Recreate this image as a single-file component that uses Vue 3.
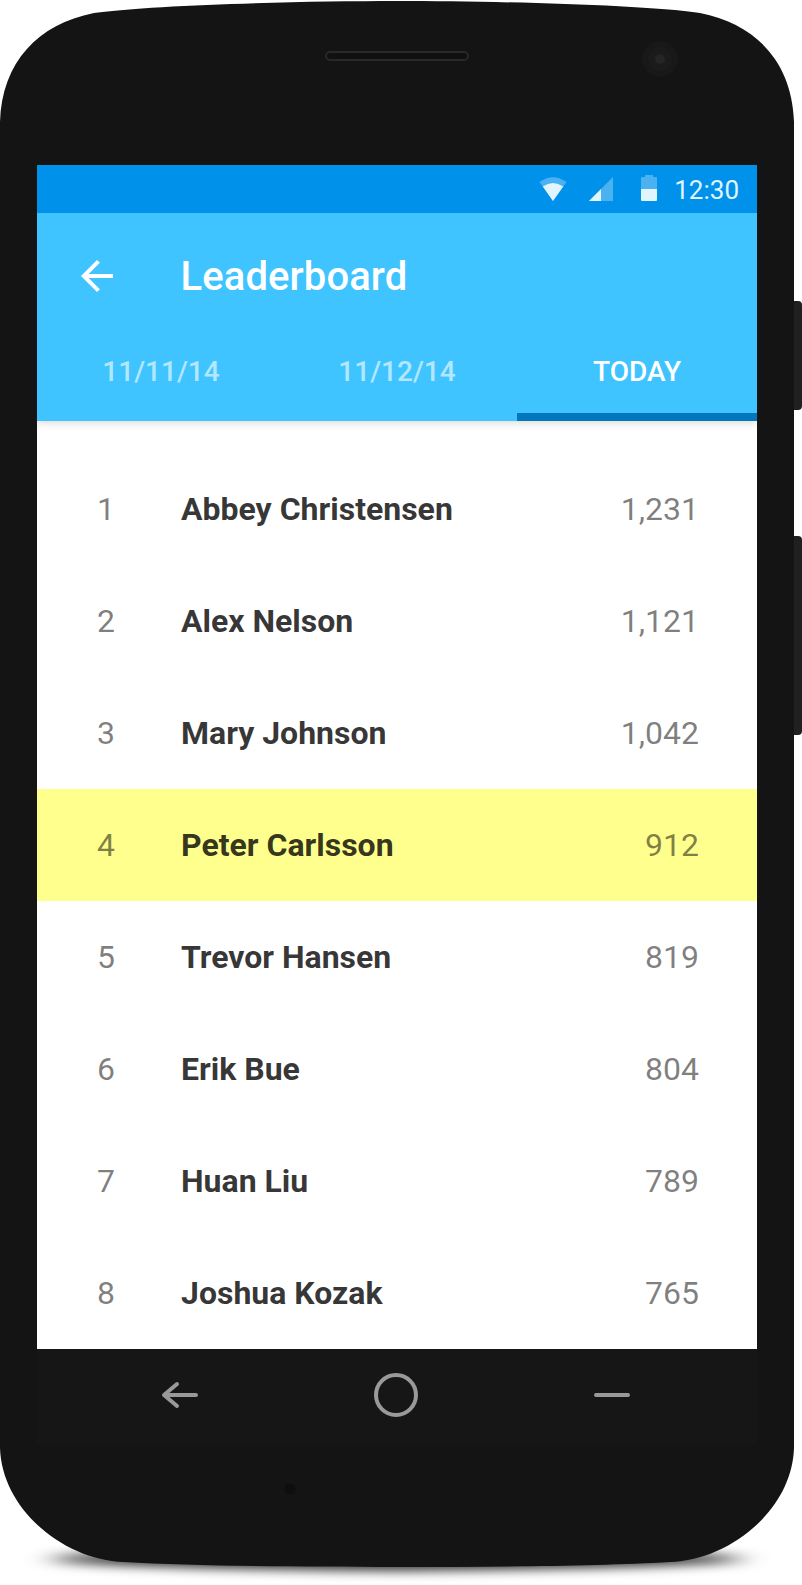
<script setup>
const tabs = [
  { label: '11/11/14', cls: 'first' },
  { label: '11/12/14', cls: 'second' },
  { label: 'TODAY', cls: 'active' },
]
const players = [
  { rank: 1, name: 'Abbey Christensen', score: '1,231' },
  { rank: 2, name: 'Alex Nelson', score: '1,121' },
  { rank: 3, name: 'Mary Johnson', score: '1,042' },
  { rank: 4, name: 'Peter Carlsson', score: '912', me: true },
  { rank: 5, name: 'Trevor Hansen', score: '819' },
  { rank: 6, name: 'Erik Bue', score: '804' },
  { rank: 7, name: 'Huan Liu', score: '789' },
  { rank: 8, name: 'Joshua Kozak', score: '765' },
]
</script>

<template>
  <div class="phone">
    <svg class="shell" width="802" height="1585" viewBox="0 0 802 1585">
      <defs>
        <filter id="soft" x="-10%" y="-150%" width="120%" height="400%">
          <feGaussianBlur stdDeviation="14 5.5" />
        </filter>
      </defs>
      <path d="M48 1559Q80 1549 397 1549Q714 1549 746 1559Q714 1568 397 1571Q80 1568 48 1559Z" fill="#000" fill-opacity=".8" filter="url(#soft)" />
      <path d="M794 301h4a4 4 0 0 1 4 4v101a4 4 0 0 1-4 4h-4zM794 536h4a4 4 0 0 1 4 4v191a4 4 0 0 1-4 4h-4z" fill="#202020" />
      <path
        d="M0 122C2 62 38 24 94 13C150 5 300 1 397 1S644 5 700 13C756 24 792 62 794 122V1448C792 1510 730 1560 670 1562C600 1566 500 1567 397 1567S194 1566 124 1562C64 1560 2 1510 0 1448Z"
        fill="#141414"
      />
      <rect x="326" y="52" width="142" height="8" rx="4" fill="#101010" stroke="#282828" stroke-width="2" />
      <circle cx="660" cy="59" r="18" fill="#181818" />
      <circle cx="660" cy="59" r="12" fill="#1b1b1b" />
      <circle cx="660" cy="59" r="5" fill="#252525" />
      <circle cx="290" cy="1489" r="5.5" fill="#0e0e0e" />
    </svg>

    <main class="screen">
      <div class="status">
        <svg class="signals" width="118" height="26" viewBox="0 0 118 26">
          <g fill="#e1f5fe">
            <path d="M0.500 7Q14 -2.500 27.500 7L14 26Z" opacity=".33" />
            <path d="M3.800 11.500Q14 4.500 24.200 11.500L14 26Z" />
            <path d="M50 26L74 2V26Z" opacity=".33" />
            <path d="M50 26L62 14V26Z" />
            <path d="M102 14V3a1 1 0 0 1 1-1h3V0h8v2h3a1 1 0 0 1 1 1v11z" opacity=".33" />
            <path d="M102 14h16v11a1 1 0 0 1-1 1h-14a1 1 0 0 1-1-1z" />
          </g>
        </svg>
        <span class="time">12:30</span>
      </div>

      <header class="appbar">
        <div class="toolbar">
          <svg width="48" height="48" viewBox="0 0 24 24">
            <path d="M20 11H7.830l5.590-5.590L12 4l-8 8 8 8 1.410-1.410L7.830 13H20z" fill="#fff" />
          </svg>
          <h1>Leaderboard</h1>
        </div>
        <nav class="tabs">
          <div v-for="t in tabs" :key="t.label" class="tab" :class="t.cls"><span>{{ t.label }}</span></div>
        </nav>
      </header>

      <section class="list">
        <div v-for="p in players" :key="p.rank" class="row" :class="{ me: p.me }">
          <span class="rank">{{ p.rank }}</span>
          <span class="name">{{ p.name }}</span>
          <span class="score">{{ p.score }}</span>
        </div>
      </section>

      <footer class="navbar">
        <svg width="48" height="48" viewBox="0 0 48 48">
          <path d="M40 24H8M21 13L8 24L21 35" />
        </svg>
        <svg width="48" height="48" viewBox="0 0 48 48">
          <circle cx="24" cy="24" r="20" />
        </svg>
        <svg width="48" height="48" viewBox="0 0 48 48">
          <path d="M8 24H40" />
        </svg>
      </footer>
    </main>
  </div>
</template>

<style>
body {
  background: #fff;
}
</style>

<style scoped>
.phone {
  position: relative;
  box-sizing: border-box;
  width: 802px;
  height: 1585px;
  padding: 165px 45px 0 37px;
  overflow: hidden;
  font-family: Roboto, sans-serif;
}
.shell {
  position: absolute;
  inset: 0;
}
.screen {
  position: relative;
  width: 720px;
  background: #fff;
}
.status {
  display: flex;
  justify-content: flex-end;
  align-items: center;
  box-sizing: border-box;
  height: 48px;
  padding-right: 18px;
  background: #0091ea;
}
.signals {
  margin: 0 17.500px 2px 0;
}
.time {
  font-size: 26px;
  line-height: 48px;
  color: #e1f5fe;
  padding-top: 2px;
}
.appbar {
  position: relative;
  height: 208px;
  background: #40c4ff;
  box-shadow: 0 2px 8px rgba(0, 0, 0, 0.15);
  clip-path: inset(0 0 -12px 0);
  color: #fff;
}
.toolbar {
  display: flex;
  align-items: center;
  height: 126px;
  padding-left: 36px;
}
h1 {
  margin: 2px 0 0 59.500px;
  font-size: 40px;
  font-weight: 500;
  line-height: 48px;
  letter-spacing: 0.1px;
}
.tabs {
  display: grid;
  grid-template-columns: repeat(3, 240px);
  height: 82px;
}
.tab {
  box-sizing: border-box;
  text-align: center;
  font-size: 28px;
  font-weight: 500;
  line-height: 32px;
  padding-top: 17px;
  color: rgba(255, 255, 255, 0.6);
}
.first {
  padding-left: 8px;
}
.active {
  color: #fff;
  border-bottom: 8px solid #0277bd;
}
.list {
  padding-top: 32px;
}
.row {
  display: grid;
  grid-template-columns: 84px 1fr auto;
  align-items: center;
  box-sizing: border-box;
  height: 112px;
  padding: 0 58px 0 60px;
  font-size: 32px;
  color: rgba(0, 0, 0, 0.5);
}
.me {
  background: #ffff8d;
}
.name {
  font-weight: 700;
  color: rgba(0, 0, 0, 0.8);
}
.navbar {
  display: flex;
  justify-content: center;
  align-items: center;
  gap: 168px;
  box-sizing: border-box;
  height: 96px;
  padding: 0 2px 4px 0;
  background: #161616;
}
.navbar path,
.navbar circle {
  fill: none;
  stroke: #999;
  stroke-width: 4;
  stroke-linecap: round;
  stroke-linejoin: round;
}
</style>
